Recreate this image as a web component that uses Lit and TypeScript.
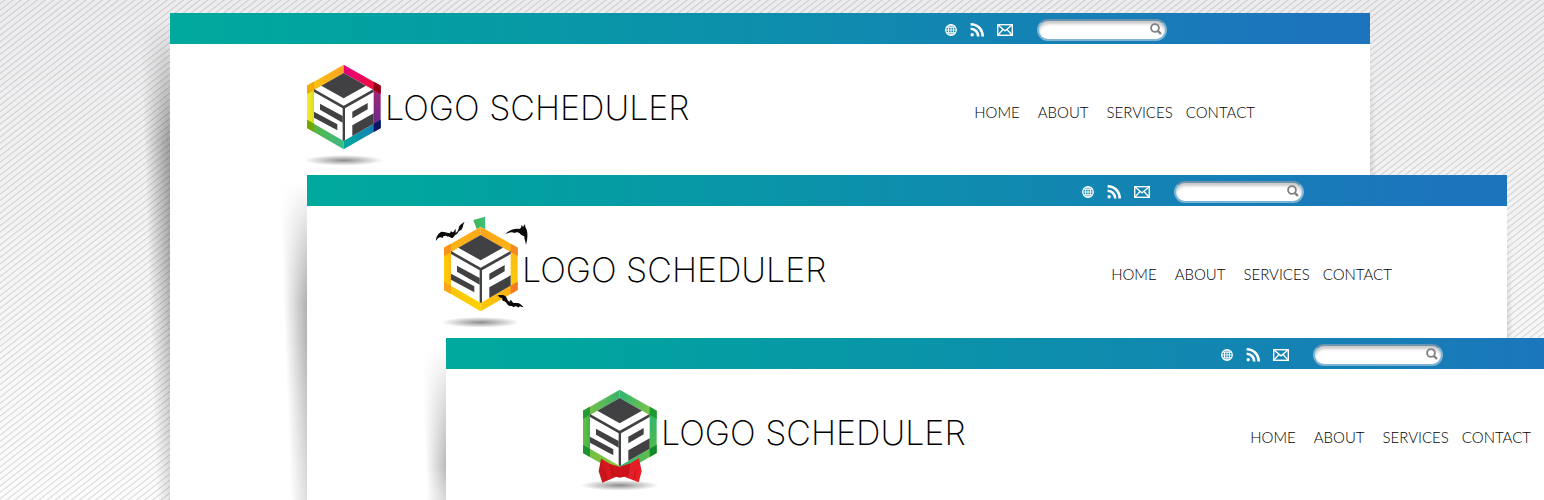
import { LitElement, html, css, svg, nothing } from "lit";
import { customElement, property } from "lit/decorators.js";

type Theme = "rainbow" | "halloween" | "holiday";

interface Palette {
  topLeft: [string, string];
  topRight: [string, string];
  left: [string, string];
  right: [string, string];
  bottomLeft: [string, string];
  bottomRight: [string, string];
  corners: [string, string, string, string];
}

const PALETTES: Record<Theme, Palette> = {
  rainbow: {
    topLeft: ["#fdc70f", "#f9a51f"],
    topRight: ["#e6007e", "#f0142f"],
    left: ["#f8ed2e", "#d5df24"],
    right: ["#b0236f", "#5b2d91"],
    bottomLeft: ["#5cb531", "#3dba8a"],
    bottomRight: ["#00a99d", "#1c75bc"],
    corners: ["#f2a900", "#8f0016", "#76a800", "#0b1560"],
  },
  halloween: {
    topLeft: ["#fdb913", "#fba919"],
    topRight: ["#fba519", "#fdb515"],
    left: ["#ffcf05", "#fdb913"],
    right: ["#fdb913", "#ffd004"],
    bottomLeft: ["#fdc20e", "#ffd200"],
    bottomRight: ["#ffca05", "#fbab18"],
    corners: ["#f7941d", "#f58a1f", "#fba61a", "#f47b20"],
  },
  holiday: {
    topLeft: ["#7fc241", "#39b36b"],
    topRight: ["#2fb574", "#8cc63f"],
    left: ["#6abf45", "#3fb54a"],
    right: ["#2bb673", "#58ba48"],
    bottomLeft: ["#6cbe45", "#8cc63f"],
    bottomRight: ["#2bb673", "#6cbe45"],
    corners: ["#229a38", "#1e9a35", "#1c9432", "#128a2c"],
  },
};

@customElement("brand-mark")
class BrandMark extends LitElement {
  @property() theme: Theme = "rainbow";

  static styles = css`
    :host {
      display: block;
      width: 100px;
      height: 120px;
    }
    .mark {
      display: block;
      width: 100%;
      height: 100%;
      overflow: visible;
    }
  `;

  private gradient(id: string, [from, to]: [string, string], vertical = false) {
    return svg`<linearGradient id=${id} x1="0" y1="0" x2=${vertical ? 0 : 1} y2=${vertical ? 1 : 0}>
      <stop offset="0" stop-color=${from} /><stop offset="1" stop-color=${to} />
    </linearGradient>`;
  }

  private extras() {
    if (this.theme === "halloween") {
      return svg`
        <path d="M124 9 L159 -1 L160 37 L146 29 L134 36Z" fill="url(#stem)" />
        <g fill="#0a0a0a">
          <path transform="translate(-3 -7)" d="M15 79 C14 67 22 55 32 51 C42 51 50 55 57 56 L60 48 L63 53 L67 52 L74 42 L74 55 C80 52 83 44 84 36 C88 29 97 23 101 21 C95 30 98 36 90 47 C83 47 83 54 77 59 C72 58 70 66 65 70 C58 71 56 64 50 66 C45 61 36 63 35 70 C26 65 20 70 15 79Z" />
          <path d="M220 52 C232 38 248 34 262 36 L267 32 L269 23 L273 30 L279 21 L280 31 C288 40 288 60 282 84 C281 72 276 67 277 58 C272 56 268 54 264 50 C260 45 252 44 248 48 C240 44 228 46 220 52Z" />
          <path transform="translate(-2 -10)" d="M199 245 C211 243 220 243 224 249 C228 255 229 263 235 264 L238 258 L243 264 L246 268 L258 268 C265 268 270 273 277 281 C268 279 265 276 261 282 C255 277 251 277 247 281 C242 275 234 280 231 275 C226 271 225 265 218 262 C213 262 212 258 213 254 C207 253 202 249 199 245Z" />
        </g>`;
    }
    if (this.theme === "holiday") {
      return svg`
        <path d="M90 236 L117 252 L146 260 L178 250 L204 235 L212 274 L203 307 L160 290 L146 293 L136 290 L94 308 L83 274Z" fill="url(#bow)" />
        <path d="M90 236 L117 253 L124 262 L120 292 L106 301 L101 272 Z" fill="#d7191f" />
        <path d="M204 235 L176 253 L170 262 L174 292 L188 300 L194 272Z" fill="#e3202a" />
        <path d="M117 253 L146 262 L177 252 L170 288 L146 292 L124 288Z" fill="#ce1219" />
        <path d="M117 253 L124 286 M177 252 L170 286 M101 272 L106 299 M194 272 L188 298" stroke="#a80d14" stroke-width="2" fill="none" />`;
    }
    return nothing;
  }

  render() {
    const p = PALETTES[this.theme];
    return html`
      <svg class="mark" viewBox="0 0 300 360" role="img" aria-label="Logo Scheduler mark">
        <defs>
          ${this.gradient("tl", p.topLeft)} ${this.gradient("tr", p.topRight)}
          ${this.gradient("l", p.left)} ${this.gradient("r", p.right, true)}
          ${this.gradient("bl", p.bottomLeft)} ${this.gradient("br", p.bottomRight)}
          ${this.gradient("stem", ["#3ab54a", "#3fbf7f"])}
          ${this.gradient("bow", ["#c4161c", "#ed1c24"])}
          <radialGradient id="ground">
            <stop offset="0" stop-color="#000" stop-opacity=".45" />
            <stop offset=".5" stop-color="#000" stop-opacity=".22" />
            <stop offset="1" stop-color="#000" stop-opacity="0" />
          </radialGradient>
        </defs>
        <ellipse cx="146" cy="316" rx="118" ry="16" fill="url(#ground)" />
        <polygon points="146,29 257,92 257,220 146,283 36,220 36,92" fill="#fff" />
        <polygon points="36,92 57,80 57,231 36,219" fill="url(#l)" />
        <polygon points="257,92 236,80 236,231 257,219" fill="url(#r)" />
        <polygon points="146,29 36,92 36,117 146,54" fill="url(#tl)" />
        <polygon points="146,29 257,92 257,117 146,54" fill="url(#tr)" />
        <polygon points="36,194 146,258 146,283 36,219" fill="url(#bl)" />
        <polygon points="257,194 146,258 146,283 257,219" fill="url(#br)" />
        <polygon points="36,92 57,80 57,105 36,117" fill=${p.corners[0]} />
        <polygon points="257,92 236,80 236,105 257,117" fill=${p.corners[1]} />
        <polygon points="36,194 57,206 57,231 36,219" fill=${p.corners[2]} />
        <polygon points="257,194 236,206 236,231 257,219" fill=${p.corners[3]} />
        <g fill="#414042">
          <polygon points="146,54 213,92 146,130 79,92" />
          <polygon points="57,102 146,152 236,102 236,111 150,160 150,256 146,258 143,256 143,160 57,111" />
          <polygon points="75,146 143,183 143,203 75,164" />
          <polygon points="57,170 127,208 127,226 57,188" />
          <polygon points="172,170 218,144 218,163 172,190" />
          <polygon points="172,211 236,175 236,206 172,243" />
        </g>
        ${this.extras()}
      </svg>
    `;
  }
}

@customElement("site-window")
class SiteWindow extends LitElement {
  @property() theme: Theme = "rainbow";

  static styles = css`
    :host {
      display: flex;
      flex-direction: column;
      isolation: isolate;
      font-family: Lato, "Open Sans", sans-serif;
      color: #000;
    }
    :host::before {
      content: "";
      position: absolute;
      z-index: -1;
      top: 8px;
      bottom: 0;
      left: -22px;
      width: 48px;
      transform: skewX(2deg);
      background: linear-gradient(to right, transparent, rgba(0, 0, 0, 0.32) 24px);
      -webkit-mask-image: linear-gradient(transparent, #000 120px, #000 50%, rgba(0, 0, 0, 0.6));
      mask-image: linear-gradient(transparent, #000 120px, #000 50%, rgba(0, 0, 0, 0.6));
    }
    :host::after {
      content: "";
      position: absolute;
      z-index: -1;
      top: 31px;
      bottom: 0;
      left: 100%;
      width: 6px;
      background: linear-gradient(to right, rgba(0, 0, 0, 0.1), transparent);
      -webkit-mask-image: linear-gradient(transparent, #000 120px);
      mask-image: linear-gradient(transparent, #000 120px);
    }
    .bar {
      display: flex;
      align-items: center;
      justify-content: flex-end;
      height: 31px;
      padding: 0 203px 0 24px;
      background: linear-gradient(to right, #00a99d, #00a69e 8%, #1c75bc 94%);
    }
    .links {
      display: flex;
      align-items: center;
      gap: 13px;
      margin-right: 24px;
      padding-top: 2px;
    }
    .links a {
      display: block;
      color: #fff;
    }
    .links svg {
      display: block;
    }
    .search {
      display: flex;
      align-items: center;
      box-sizing: border-box;
      width: 130px;
      height: 22px;
      margin-top: 3px;
      border: 2px solid #7cb4d6;
      border-top-color: #6c93ad;
      border-radius: 11px;
      background: #fff;
      box-shadow: inset 0 3px 3px rgba(60, 60, 60, 0.28);
    }
    .field {
      flex: 1;
      min-width: 0;
      padding: 0 0 0 8px;
      border: 0;
      outline: 0;
      background: none;
      font: 12px Lato, sans-serif;
    }
    .go {
      padding: 0 3px 2px 0;
      border: 0;
      background: none;
      color: #808285;
    }
    .go svg {
      display: block;
    }
    .page {
      flex: 1;
      display: flex;
      align-items: flex-start;
      justify-content: space-between;
      padding: 11px 115px 0 125px;
      background: #fff;
    }
    .brand {
      display: flex;
      align-items: flex-start;
      color: inherit;
      text-decoration: none;
    }
    .name {
      margin: 31px 0 0 -10px;
      font-family: Inter, Lato, sans-serif;
      font-size: 34px;
      line-height: 44px;
      font-weight: 200;
      white-space: nowrap;
    }
    .menu {
      display: flex;
      gap: 18px;
      margin-top: 46px;
      font-size: 15px;
      line-height: 22px;
      font-weight: 300;
      white-space: nowrap;
    }
    .menu a {
      color: inherit;
      text-decoration: none;
    }
    .menu a:last-child {
      margin-left: -5px;
    }
  `;

  render() {
    return html`
      <header class="bar">
        <nav class="links" aria-label="Social">
          <a href="#web" aria-label="Website">
            <svg width="12" height="12" viewBox="0 0 12 12" fill="none" stroke="currentColor">
              <circle cx="6" cy="6" r="5.3" stroke-width="1.2" />
              <ellipse cx="6" cy="6" rx="2.6" ry="5.3" />
              <path d="M6 .5v11M.5 6h11M1.5 3.3h9M1.5 8.7h9" stroke-width=".9" />
            </svg>
          </a>
          <a href="#feed" aria-label="Feed">
            <svg width="14" height="14" viewBox="0 0 14 14" fill="none" stroke="currentColor" stroke-width="2.6">
              <circle cx="2.2" cy="11.8" r="1.7" fill="currentColor" stroke="none" />
              <path d="M.6 5.8c4.4 0 7.6 3.2 7.6 7.8M.6 1.3c7 0 12.1 5 12.1 12.3" />
            </svg>
          </a>
          <a href="#mail" aria-label="Mail">
            <svg width="16" height="12" viewBox="0 0 16 12" fill="none" stroke="currentColor">
              <rect x=".7" y=".7" width="14.6" height="10.6" stroke-width="1.4" />
              <path d="M1 1l7 5.8L15 1M1 11l4.8-5.2M15 11l-4.8-5.2" stroke-width="1.3" />
            </svg>
          </a>
        </nav>
        <form class="search" role="search">
          <input class="field" type="text" aria-label="Search" />
          <button class="go" type="button" aria-label="Go">
            <svg width="12" height="12" viewBox="0 0 12 12" fill="none" stroke="currentColor">
              <circle cx="5" cy="5" r="3.9" stroke-width="1.9" />
              <path d="M7.8 7.8l3.2 3.2" stroke-width="2.4" />
            </svg>
          </button>
        </form>
      </header>
      <main class="page">
        <a class="brand" href="#home">
          <brand-mark theme=${this.theme}></brand-mark>
          <span class="name">LOGO SCHEDULER</span>
        </a>
        <nav class="menu" aria-label="Main">
          <a href="#home">HOME</a>
          <a href="#about">ABOUT</a>
          <a href="#services">SERVICES</a>
          <a href="#contact">CONTACT</a>
        </nav>
      </main>
    `;
  }
}

@customElement("app-root")
class AppRoot extends LitElement {
  static styles = css`
    :host {
      display: block;
      position: relative;
      overflow: hidden;
      height: 100vh;
      background: repeating-linear-gradient(
          142deg,
          transparent 0 2px,
          rgba(0, 0, 0, 0.14) 3px,
          transparent 4px 5px
        ),
        linear-gradient(#ececee, #fcfcfc);
    }
    .window {
      position: absolute;
      bottom: 0;
      width: 77.72%;
    }
    .first {
      top: 13px;
      left: 11.01%;
    }
    .second {
      top: 175px;
      left: 19.88%;
    }
    .third {
      top: 338px;
      left: 28.89%;
    }
  `;

  render() {
    return html`
      <site-window class="window first" theme="rainbow"></site-window>
      <site-window class="window second" theme="halloween"></site-window>
      <site-window class="window third" theme="holiday"></site-window>
    `;
  }
}
